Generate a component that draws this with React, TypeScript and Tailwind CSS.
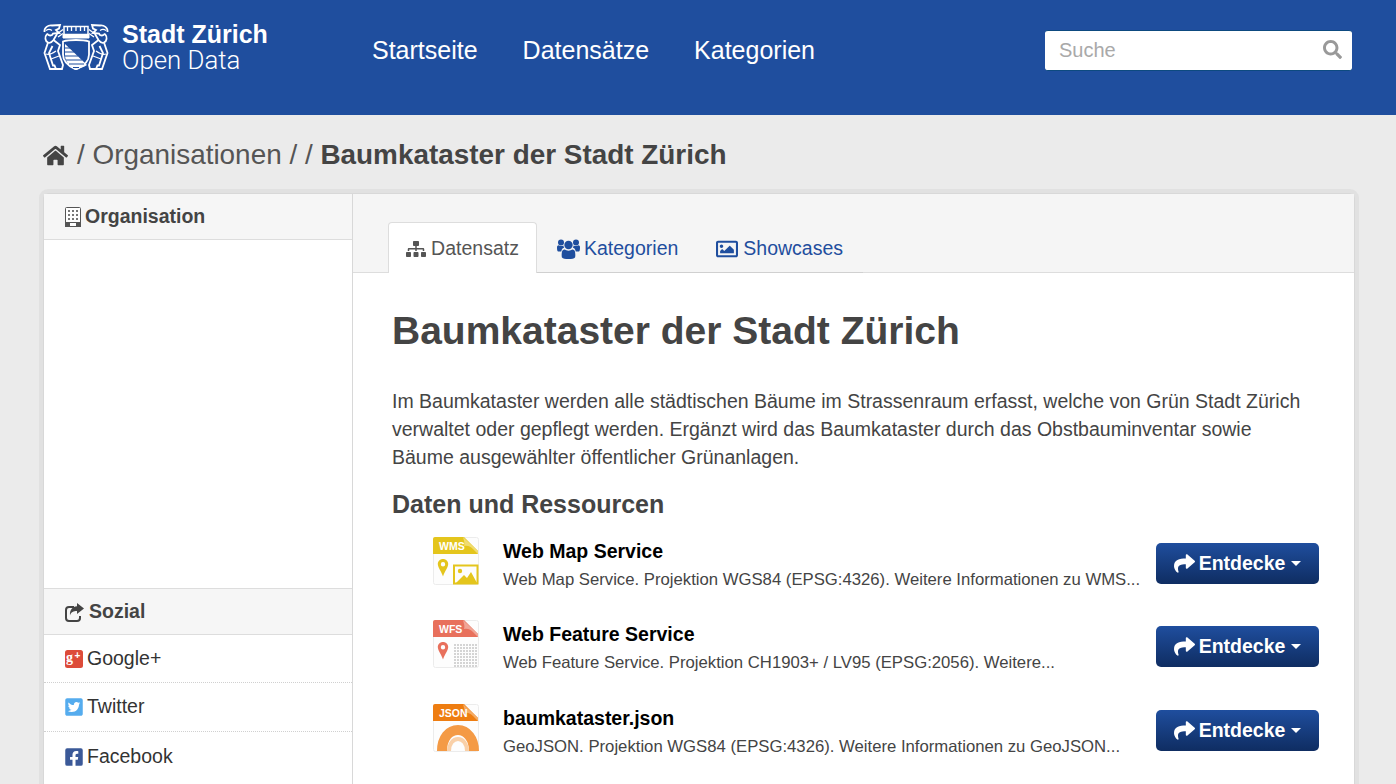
import React from "react";
import { FaHome, FaSearch, FaSitemap, FaRegImage, FaShare, FaTwitterSquare, FaFacebookSquare } from "react-icons/fa";

function Lion({ flip }: { flip?: boolean }) {
  return (
    <g transform={flip ? "translate(66 0) scale(-1 1)" : undefined}>
      <path d="M1.500 8C1 3.500 5 1 9 1.500l8-.5-1 3.500-3 1.500 3 3-6 .5-1 1.500c-2 1-4 0-5-1.500" />
      <path d="M3 6.500c2-1.500 4-1.500 6 0" strokeWidth="1.100" />
      <path d="M4 10c-2.500 3-2 7 1 8.500 2 1 4-.5 5.500-2.500L14 10" />
      <path d="M14 10l6-4.500M15 13l5-3.500" strokeWidth="1.300" />
      <path d="M5 18.500 1.500 29 7 45h6l-1.500-3.500H10L6 29l3.500-7" />
      <path d="M10.500 16 17 21l-2 6 5 14-1 4h-6.500" />
      <path d="M3 30c3 1 6 0 10-3M8 35l8-3" strokeWidth="1.200" />
    </g>
  );
}

function Logo() {
  return (
    <svg width="66" height="46" viewBox="0 0 66 46" fill="none" stroke="#fff" strokeWidth="1.800" className="shrink-0">
      <path d="M21 2.500h24v8H21z" strokeWidth="1.500" />
      <path d="M24.500 3v4M28.500 3v4M33 3v4M37.500 3v4M41.500 3v4" strokeWidth="1.300" />
      <path d="M20 10.500h26v3.500H20z" fill="#fff" strokeWidth="1" />
      <path d="M20 17.500c6-2 20-2 26 0v13c0 7-6 12-13 15-7-3-13-8-13-15z" strokeWidth="1.800" />
      <path d="M22 20 44 41c-3 2-7 3.500-11 4-6-2-11-7-11-14z" fill="#fff" stroke="none" />
      <path d="M22 24h5M22 28h9M22 32h13M23 36h16M26 40h15M30 43.500h6" stroke="#1f4e9e" strokeWidth="1.200" />
      <Lion />
      <Lion flip />
    </svg>
  );
}

function FileIcon({ label, color, fold, kind }: { label: string; color: string; fold: string; kind: "wms" | "wfs" | "json" }) {
  return (
    <svg width="46" height="48" viewBox="0 0 46 48" className="shrink-0">
      <rect x="0.500" y="0.500" width="45" height="47" rx="2" fill="#fdfdfd" stroke="#ececec" />
      <path d="M0 2a2 2 0 0 1 2-2h29l14 14v3H0z" fill={color} />
      <path d="M30 0c1 4 2 6 1 9 4-1 7 1 9 3l5 5v-3z" fill={fold} />
      <text x="6" y="13" fontSize="10.500" fontWeight="700" fill="#fff" fontFamily="Liberation Sans, sans-serif">{label}</text>
      {kind !== "json" && (
        <path d="M10 22c-3 0-5.200 2.300-5.200 5 0 3.500 3.700 7.500 5.200 12.500 1.500-5 5.200-9 5.200-12.500 0-2.700-2.200-5-5.200-5zm0 3a2.200 2.200 0 1 1 0 4.400 2.200 2.200 0 0 1 0-4.400z" fill={color} />
      )}
      {kind === "wms" && (
        <g>
          <rect x="21" y="28.500" width="23.500" height="18" fill="none" stroke={color} strokeWidth="2" />
          <circle cx="27" cy="34" r="2.200" fill={color} />
          <path d="M23 46l8-8 3 3 4-6 6 11z" fill={color} />
        </g>
      )}
      {kind === "wfs" && (
        <g stroke="#c6c6c6" strokeWidth="1.500" strokeDasharray="2 1">
          <path d="M21 25h24M21 28h24M21 31h24M21 34h24M21 37h24M21 40h24M21 43h24M21 46h24" />
        </g>
      )}
      {kind === "json" && (
        <g fill="none">
          <path d="M9 47c0-13 7-21 16-21s16 9 16 21" stroke="#f49a45" strokeWidth="10" />
          <path d="M16 47c0-7 4-12 9-12s9 5 9 12" stroke="#f9d0a8" strokeWidth="4" />
        </g>
      )}
    </svg>
  );
}

function Resource({ title, desc, label, color, fold, kind, rowClass }: { title: string; desc: string; label: string; color: string; fold: string; kind: "wms" | "wfs" | "json"; rowClass: string }) {
  return (
    <div className={`flex items-start ${rowClass}`}>
      <div className="ml-[42px] -mt-[1px] w-[70px]">
        <FileIcon label={label} color={color} fold={fold} kind={kind} />
      </div>
      <div className="w-[653px] min-w-0">
        <div className="text-[19.500px] leading-[26px] font-bold text-black">{title}</div>
        <div className="mt-[4px] whitespace-nowrap text-[16.720px] leading-[24px] text-[#444444]">{desc}</div>
      </div>
      <button className="mt-[5px] flex h-[41px] w-[163px] items-center justify-center gap-[4px] rounded-[5px] bg-gradient-to-b from-[#1f4e9e] to-[#0f2d62] text-[19.500px] font-bold text-white">
        <FaShare className="text-[21px]" />
        <span>Entdecke</span>
        <span className="ml-[2px] h-0 w-0 border-x-[5px] border-t-[5px] border-x-transparent border-t-white" />
      </button>
    </div>
  );
}

function SocialRow({ icon, label, rowClass }: { icon: React.ReactNode; label: string; rowClass: string }) {
  return (
    <div className={`flex items-center gap-[3px] pl-[21px] text-[19.500px] text-[#333333] ${rowClass}`}>
      {icon}
      <span>{label}</span>
    </div>
  );
}

export default function App() {
  return (
    <div className="h-[784px] overflow-hidden bg-[#ebebeb] font-['Liberation_Sans',Arial,sans-serif] text-[#444444]">
      <header className="flex h-[115px] items-start bg-[#1f4e9e] pl-[43px] pr-[44px]">
        <div className="mt-[24px] flex w-[329px] items-start gap-[13px]">
          <Logo />
          <div className="-mt-[3px] w-[160px] text-white">
            <div className="text-[25px] leading-[26px] font-bold whitespace-nowrap">Stadt Zürich</div>
            <div className="font-['Roboto',sans-serif] text-[25.800px] leading-[26px] font-light whitespace-nowrap">Open Data</div>
          </div>
        </div>
        <nav className="mt-[36px] flex gap-[45px] text-[25px] leading-[29px] text-white">
          <span>Startseite</span>
          <span>Datensätze</span>
          <span>Kategorien</span>
        </nav>
        <div className="ml-auto mt-[30px] flex h-[41px] w-[307px] items-center justify-between rounded-[3px] border-t border-b border-t-[#0d4a80] border-b-[#0d4a80] bg-white pb-[2px] pl-[14px] pr-[10px]">
          <span className="text-[20px] text-[#a9a9a9]">Suche</span>
          <FaSearch className="text-[19px] text-[#999999]" />
        </div>
      </header>

      <div className="flex h-[78px] items-center pl-[43px] pt-[2px] text-[27.900px] text-[#555555]">
        <FaHome className="mr-[9px] text-[25px] text-[#444444]" />
        <span>/&nbsp;Organisationen / /&nbsp;</span>
        <span className="font-bold text-[#444444]">Baumkataster der Stadt Zürich</span>
      </div>

      <main className="ml-[43px] mr-[41px] flex h-[600px] rounded-t-[5px] border border-[#d8d8d8] bg-white shadow-[0_0_0_4px_#e1e1e1]">
        <aside className="w-[309px] shrink-0 border-r border-[#d8d8d8]">
          <div className="flex h-[46px] items-center gap-[4px] border-b border-[#dddddd] bg-[#f6f6f6] pl-[21px] text-[19.500px] font-bold text-[#444444]">
            <svg width="16" height="20" viewBox="0 0 16 20" className="shrink-0">
              <rect x="0.500" y="0.500" width="15" height="19" rx="1" fill="#fff" stroke="#555" />
              <path d="M3 3h2v2H3zM7 3h2v2H7zM11 3h2v2h-2zM3 7h2v2H3zM7 7h2v2H7zM11 7h2v2h-2zM3 11h2v2H3zM7 11h2v2H7zM11 11h2v2h-2z" fill="#777" />
              <path d="M0 15h16v5H0zM5 16h6v4H5z" fill="#555" fillRule="evenodd" />
            </svg>
            <span>Organisation</span>
          </div>
          <div className="h-[348px]" />
          <div className="flex h-[47px] items-center gap-[5px] border-y border-[#dddddd] bg-[#f6f6f6] pl-[21px] pt-[1px] text-[19.500px] font-bold text-[#444444]">
            <svg width="19" height="19" viewBox="0 0 19 19" className="shrink-0">
              <path d="M9 4H4a3 3 0 0 0-3 3v8a3 3 0 0 0 3 3h8a3 3 0 0 0 3-3v-2" fill="none" stroke="#444" strokeWidth="2" />
              <path d="M12 0l7 5.500-7 5.500V8C8.500 8 6 9 5 12.500 4.500 7 7.500 3.500 12 3.200z" fill="#444" />
            </svg>
            <span>Sozial</span>
          </div>
          <SocialRow rowClass="h-[48px] border-b border-dotted border-[#d0d0d0]" label="Google+" icon={
            <svg width="18" height="18" viewBox="0 0 18 18" className="mr-[1px] shrink-0">
              <rect width="18" height="18" rx="2.500" fill="#dd4b39" />
              <text x="1" y="12" fontSize="14" fontWeight="700" fill="#fff" fontFamily="Liberation Serif, serif">g</text>
              <text x="9.500" y="9" fontSize="10" fontWeight="700" fill="#fff" fontFamily="Liberation Sans, sans-serif">+</text>
            </svg>
          } />
          <SocialRow rowClass="h-[49px] border-b border-dotted border-[#d0d0d0]" label="Twitter" icon={<FaTwitterSquare className="-ml-[1px] text-[20px] text-[#55acee]" />} />
          <SocialRow rowClass="h-[49px]" label="Facebook" icon={<FaFacebookSquare className="-ml-[1px] text-[20px] text-[#3b5998]" />} />
        </aside>

        <section className="min-w-0 flex-1">
          <div className="flex h-[79px] items-end border-b border-[#dddddd] bg-[#f5f5f5] pl-[35px]">
            <div className="relative -mb-px flex h-[51px] w-[149px] items-center justify-center gap-[5px] rounded-t-[4px] border border-b-0 border-[#dddddd] bg-white pt-[2px] text-[19.500px] text-[#555555]">
              <FaSitemap className="text-[20px]" />
              <span>Datensatz</span>
            </div>
            <div className="-mb-px flex h-[50px] items-center border-b border-[#d0d0d0] px-[20px] pt-[2px] text-[19.500px] text-[#1f4e9e]">
              <span className="flex items-center gap-[4px]">
                <svg width="23" height="20" viewBox="0 0 23 20" fill="#1f4e9e" className="shrink-0">
                  <circle cx="11.500" cy="6" r="4.200" />
                  <circle cx="4" cy="3.500" r="3" />
                  <circle cx="19" cy="3.500" r="3" />
                  <path d="M5.500 11.500c1-1 2-1.300 2.500-1 1 1.500 6 1.500 7 0 .5-.3 1.500 0 2.500 1 1 1.200 1 6.500.5 7-1 1.200-3 1.500-6.500 1.500S6 19.700 5 18.500c-.5-.5-.5-5.800.5-7z" />
                  <path d="M0 8c0-1 .5-1.500 1.500-1.800 1.500 1 3.500 1 4.800.2.200.8.500 1.500 1 2.200-1.500.5-2.800 1.800-3 4H1C.3 12 0 11 0 8zM23 8c0-1-.5-1.500-1.500-1.800-1.500 1-3.500 1-4.800.2-.2.8-.5 1.500-1 2.200 1.500.5 2.800 1.800 3 4H22c.7-.6 1-1.600 1-4.600z" />
                </svg>
                <span>Kategorien</span>
              </span>
              <span className="ml-[38px] flex items-center gap-[5px]"><FaRegImage className="text-[22px]" /><span>Showcases</span></span>
            </div>
          </div>
          <div className="pl-[39px] pr-[35px]">
            <h1 className="mt-[35px] whitespace-nowrap text-[39px] leading-[45px] font-bold text-[#444444]">Baumkataster der Stadt Zürich</h1>
            <p className="mt-[34px] whitespace-nowrap text-[19.500px] leading-[28px] text-[#444444]">
              Im Baumkataster werden alle städtischen Bäume im Strassenraum erfasst, welche von Grün Stadt Zürich
              <br />
              verwaltet oder gepflegt werden. Ergänzt wird das Baumkataster durch das Obstbauminventar sowie
              <br />
              Bäume ausgewählter öffentlicher Grünanlagen.
            </p>
            <h3 className="mt-[16px] mb-[17px] text-[25px] leading-[34px] font-bold text-[#444444]">Daten und Ressourcen</h3>
            <div className="-ml-[1px]">
              <Resource rowClass="h-[83px]" kind="wms" label="WMS" color="#e4c51c" fold="#f0dc70" title="Web Map Service" desc="Web Map Service. Projektion WGS84 (EPSG:4326). Weitere Informationen zu WMS..." />
              <Resource rowClass="h-[84px]" kind="wfs" label="WFS" color="#e8705c" fold="#f0a596" title="Web Feature Service" desc="Web Feature Service. Projektion CH1903+ / LV95 (EPSG:2056). Weitere..." />
              <Resource rowClass="h-[84px]" kind="json" label="JSON" color="#ee7d11" fold="#f5ac66" title="baumkataster.json" desc="GeoJSON. Projektion WGS84 (EPSG:4326). Weitere Informationen zu GeoJSON..." />
            </div>
          </div>
        </section>
      </main>
    </div>
  );
}
